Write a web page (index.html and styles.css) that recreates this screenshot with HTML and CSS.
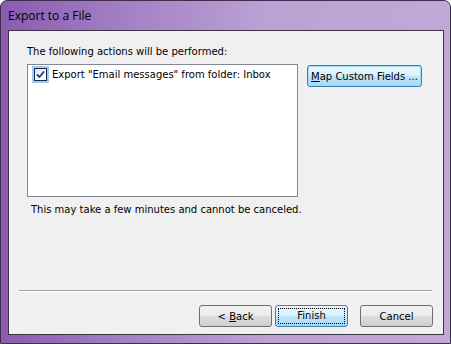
FILE: index.html
```html
<!DOCTYPE html>
<html lang="en">
<head>
  <meta charset="UTF-8" />
  <title>Export to a File</title>
  <link rel="stylesheet" href="styles.css">
</head>
<body>
  <div class="window">
    <div class="titlebar">Export to a File</div>

    <div class="client">
      <p class="label">The following actions will be performed:</p>

      <div class="row">
        <div class="listbox">
          <div class="item">
            <span class="check-wrap">
              <span class="check">
                <svg width="11" height="11" viewBox="0 0 11 11"><path d="M2 5.5 L4.5 8 L9 2.5" fill="none" stroke="#1c3f7d" stroke-width="1.8"/></svg>
              </span>
            </span>
            <span>Export "Email messages" from folder: Inbox</span>
          </div>
        </div>
        <button class="btn btn-focus map"><u>M</u>ap Custom Fields ...</button>
      </div>

      <p class="note">This may take a few minutes and cannot be canceled.</p>

      <div class="sep"></div>

      <div class="buttons">
        <button class="btn">&lt; <u>B</u>ack</button>
        <button class="btn btn-default"><span class="focus-ring">Finish</span></button>
        <button class="btn cancel">Cancel</button>
      </div>
    </div>
  </div>
</body>
</html>
```

FILE: styles.css
```css
body {
  margin: 0;
  background: #ffffff;
  font-family: "DejaVu Sans", sans-serif;
  font-size: 10px;
  color: #000;
}
.window {
  width: 451px;
  height: 344px;
  box-sizing: border-box;
  border: 1px solid #3e2f4e;
  border-radius: 7px 7px 0 0;
  background: linear-gradient(90deg, #8a5bb1 0%, #a583c6 30%, #bca2d4 60%, #c1a8d8 100%);
  display: flex;
  flex-direction: column;
  padding: 0 6px 8px 7px;
}
.titlebar {
  height: 29px;
  line-height: 30px;
  font-family: "Open Sans", sans-serif;
  font-size: 12px;
  color: #000;
}
.client {
  flex: 1;
  border: 1px solid #3b3346;
  background: #f0f0f0;
  display: flex;
  flex-direction: column;
  padding: 14px 0 7px 18px;
}
.label {
  margin: 0 0 6px 0;
  line-height: 13px;
}
.row {
  display: flex;
  align-items: flex-start;
}
.listbox {
  width: 269px;
  height: 131px;
  border: 1px solid #828790;
  background: #fff;
}
.item {
  display: flex;
  align-items: center;
  height: 17px;
  margin-top: 1px;
  gap: 3px;
}
.check-wrap {
  width: 17px;
  height: 17px;
  margin-left: 4px;
  background: #9fcdf3;
  display: flex;
  align-items: center;
  justify-content: center;
}
.check {
  width: 11px;
  height: 11px;
  border: 1px solid #1c2a50;
  background: linear-gradient(135deg, #dbe8f8, #ffffff);
  display: flex;
}
.btn {
  height: 22px;
  box-sizing: border-box;
  border: 1px solid #707070;
  border-radius: 3px;
  background: linear-gradient(#f2f2f2 0%, #ebebeb 50%, #dddddd 51%, #cfcfcf 100%);
  font-family: "DejaVu Sans", sans-serif;
  font-size: 10px;
  color: #000;
  padding: 0;
  white-space: nowrap;
}
.btn-focus {
  border-color: #3c7fb1;
  background: linear-gradient(#eaf6fd 0%, #d9f0fc 50%, #bee6fd 51%, #a7d9f5 100%);
  box-shadow: inset 0 0 0 1px #9ddcfb;
}
.map {
  width: 115px;
  margin: 1px 0 0 9px;
}
.note {
  margin: 6px 0 0 4px;
  line-height: 13px;
}
.sep {
  margin: auto 0 0 -8px;
  width: 413px;
  height: 1px;
  background: #a0a0a0;
  border-bottom: 1px solid #ffffff;
}
.buttons {
  display: flex;
  margin: 13px 0 0 172px;
}
.buttons .btn {
  width: 73px;
  margin-right: 3px;
}
.buttons .cancel {
  margin-left: 9px;
}
.btn-default {
  border-color: #3c7fb1;
  background: linear-gradient(#eaf6fd 0%, #d9f0fc 50%, #bee6fd 51%, #a7d9f5 100%);
  padding: 2px;
}
.focus-ring {
  display: block;
  height: 100%;
  box-sizing: border-box;
  border: 1px dotted #000;
  line-height: 14px;
}
```
